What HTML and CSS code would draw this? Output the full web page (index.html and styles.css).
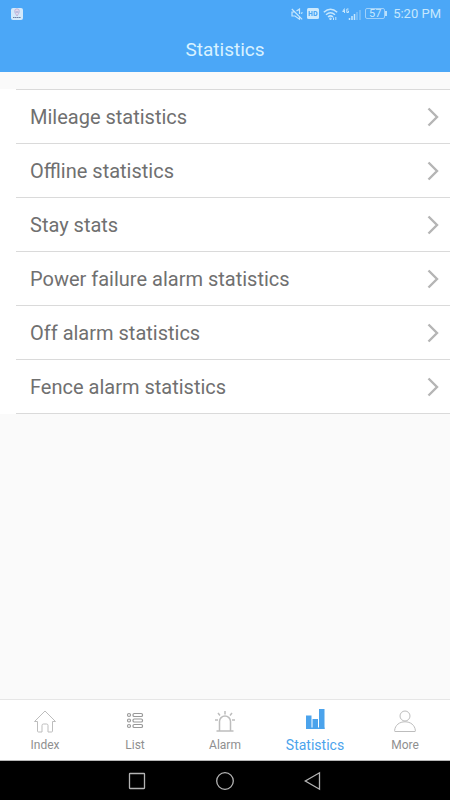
FILE: index.html
```html
<!DOCTYPE html>
<html lang="en">
<head>
<meta charset="utf-8">
<meta name="viewport" content="width=device-width, initial-scale=1">
<title>Statistics</title>
<link rel="stylesheet" href="styles.css">
</head>
<body>
<header class="top">
  <div class="status">
    <svg class="app-badge" width="12" height="12" viewBox="0 0 12 12" aria-hidden="true">
      <rect width="12" height="12" rx="2" fill="#d3e9fb"/>
      <path d="M6 .8a2.4 2.4 0 0 1 2.3 2.6C8.300 5 7 6.200 6 8 5 6.200 3.700 5 3.700 3.400A2.400 2.400 0 0 1 6 .8z" fill="#e3d9ee" stroke="#b9abd0" stroke-width=".8"/>
      <path d="M4.500 4h3" stroke="#8aa5d2" stroke-width="1"/>
      <path d="M2 9.500h8" stroke="#6f83a8" stroke-width="1.200" stroke-dasharray="1.500 .4"/>
    </svg>
    <svg width="12" height="12" viewBox="0 0 12 12" fill="none" stroke="#c6e7fd" stroke-width="1.200" aria-hidden="true">
      <path d="M.8 1l10.400 10.400M3.500 4H1v4h3l4.500 3.200V8.500M5.500 3L8.500 1v5M10 5.500l1.500-1"/>
    </svg>
    <svg width="12" height="11" viewBox="0 0 12 11" aria-hidden="true">
      <rect width="12" height="11" rx="1.500" fill="#cdeafd"/>
      <path d="M2.200 3v5M5 3v5M2.200 5.500H5M7.200 3.500v4h1q1.800 0 1.800-2t-1.800-2z" fill="none" stroke="#4ba7f5" stroke-width="1.200"/>
    </svg>
    <svg width="15" height="12" viewBox="0 0 15 12" fill="none" stroke="#c6e7fd" stroke-width="1.500" aria-hidden="true">
      <path d="M.8 4.200q6.700-6 13.400 0M3 6.700q4.500-4 9 0M5 9q2.500-2.200 5 0"/>
      <circle cx="7.500" cy="10.800" r=".5"/>
      <path d="M10.500 12V9.500M12.800 9v3" stroke-width="1"/>
    </svg>
    <svg width="19" height="12" viewBox="0 0 19 12" fill="none" stroke="#c6e7fd" aria-hidden="true">
      <path d="M2.500.5L.7 3.500h2.300M2.500 1.500v3.500M6.500 1H4.800v3.500h1.700V3H5.600" stroke-width="1"/>
      <path d="M7.500 12v-2M10 12V8M12.500 12V6" stroke-width="1.500"/>
      <path d="M15 12V4M18 12V2" stroke="#80c1f8" stroke-width="1.500"/>
    </svg>
    <span class="battery">57</span>
    <span class="clock">5:20 PM</span>
  </div>
  <h1 class="title">Statistics</h1>
</header>

<main class="content">
  <ul class="menu">
    <li><a class="row" href="#mileage">Mileage statistics<svg class="chevron" viewBox="0 0 12 20" aria-hidden="true"><path d="M1.500 1.500L10 10l-8.500 8.500"/></svg></a></li>
    <li><a class="row" href="#offline">Offline statistics<svg class="chevron" viewBox="0 0 12 20" aria-hidden="true"><path d="M1.500 1.500L10 10l-8.500 8.500"/></svg></a></li>
    <li><a class="row" href="#stay">Stay stats<svg class="chevron" viewBox="0 0 12 20" aria-hidden="true"><path d="M1.500 1.500L10 10l-8.500 8.500"/></svg></a></li>
    <li><a class="row" href="#power">Power failure alarm statistics<svg class="chevron" viewBox="0 0 12 20" aria-hidden="true"><path d="M1.500 1.500L10 10l-8.500 8.500"/></svg></a></li>
    <li><a class="row" href="#off">Off alarm statistics<svg class="chevron" viewBox="0 0 12 20" aria-hidden="true"><path d="M1.500 1.500L10 10l-8.500 8.500"/></svg></a></li>
    <li><a class="row" href="#fence">Fence alarm statistics<svg class="chevron" viewBox="0 0 12 20" aria-hidden="true"><path d="M1.500 1.500L10 10l-8.500 8.500"/></svg></a></li>
  </ul>
</main>

<nav class="tabs">
  <a class="tab" href="#index">
    <svg class="icon" viewBox="0 0 24 24" aria-hidden="true"><path d="M1.500 12.500L12 2l10.500 10.500h-3V22q0 1-1 1H15v-6.500q0-1.500-1.500-1.500h-3Q9 15 9 16.500V23H5.500q-1 0-1-1v-9.500z"/></svg>
    Index
  </a>
  <a class="tab" href="#list">
    <svg class="icon dark" viewBox="0 0 24 24" aria-hidden="true">
      <circle cx="6" cy="6" r="1.500"/><circle cx="6" cy="11.500" r="1.500"/><circle cx="6" cy="17" r="1.500"/>
      <rect x="10" y="4.500" width="9.500" height="3" rx="1.300"/><rect x="10" y="10" width="9.500" height="3" rx="1.300"/><rect x="10" y="15.500" width="9.500" height="3" rx="1.300"/>
    </svg>
    List
  </a>
  <a class="tab" href="#alarm">
    <svg class="icon heavy" viewBox="0 0 24 24" aria-hidden="true"><path d="M3.500 22h17M6.500 22V12.500a5.500 5.500 0 0 1 11 0V22M12 2v3.500M5 4l2 2.500M19 4l-2 2.500M2 11h3M19 11h3"/></svg>
    Alarm
  </a>
  <a class="tab active" href="#statistics" aria-current="page">
    <svg class="icon solid" viewBox="0 0 24 24" aria-hidden="true"><path d="M3 6.500h5.500V20H3zM9.500 10H15v10H9.500zM16 0h5.500v20H16z"/><path d="M3 18.500h18.500V20H3z"/></svg>
    Statistics
  </a>
  <a class="tab" href="#more">
    <svg class="icon" viewBox="0 0 24 24" aria-hidden="true"><circle cx="12" cy="7" r="5"/><path d="M2 22.500q-.5 0-.4-1C2.200 16 6.500 12.800 12 12.800S21.800 16 22.400 21.500q.1 1-.4 1z"/></svg>
    More
  </a>
</nav>

<footer class="system">
  <button class="key" type="button" aria-label="Recent apps"><svg viewBox="0 0 20 20" aria-hidden="true"><rect x="2.500" y="2.500" width="15" height="15" rx=".5"/></svg></button>
  <button class="key" type="button" aria-label="Home"><svg viewBox="0 0 20 20" aria-hidden="true"><circle cx="10" cy="10" r="8.300"/></svg></button>
  <button class="key" type="button" aria-label="Back"><svg viewBox="0 0 20 20" aria-hidden="true"><path d="M16.500 1.800v16.400L2.300 10z"/></svg></button>
</footer>
</body>
</html>
```
FILE: styles.css
```css
* {
  box-sizing: border-box;
}

body {
  margin: 0;
  min-height: 100vh;
  display: flex;
  flex-direction: column;
  background: #fafafa;
  color: #707070;
  font-family: Roboto, "Liberation Sans", sans-serif;
}

a {
  color: inherit;
  text-decoration: none;
}

.top {
  background: #4ba7f7;
  color: #d8f2ff;
}

.status {
  display: flex;
  align-items: center;
  gap: 4px;
  height: 27px;
  padding: 0 9px 0 11px;
}

.app-badge {
  margin-right: auto;
}

.battery {
  position: relative;
  width: 20px;
  height: 11px;
  margin-right: 4px;
  border: 1px solid #9fd1fa;
  border-radius: 2px;
  color: #c6e7fd;
  font-size: 11px;
  line-height: 10px;
  text-align: center;
}

.battery::after {
  content: "";
  position: absolute;
  top: 2px;
  right: -3px;
  width: 2px;
  height: 5px;
  background: #b9e0fc;
}

.clock {
  color: #c6e7fd;
  font-size: 13px;
}

.title {
  margin: 0;
  height: 45px;
  font-size: 19px;
  font-weight: 400;
  line-height: 46px;
  text-align: center;
}

.content {
  flex: 1;
  padding-top: 17px;
}

.menu {
  margin: 0;
  padding: 0 0 0 16px;
  background: #fff;
  list-style: none;
}

.menu li {
  border-bottom: 1px solid #dadada;
}

.menu li:first-child {
  border-top: 1px solid #dadada;
}

.row {
  display: flex;
  align-items: center;
  justify-content: space-between;
  height: 53px;
  padding: 0 11px 0 14px;
  font-size: 20px;
}

.chevron {
  width: 12px;
  height: 20px;
  fill: none;
  stroke: #b5b5b5;
  stroke-width: 2.4;
}

.tabs {
  display: flex;
  height: 62px;
  border-top: 1px solid #e6e6e6;
  border-bottom: 1px solid #b8b8b8;
  background: #fff;
}

.tab {
  flex: 1;
  display: flex;
  flex-direction: column;
  align-items: center;
  gap: 4px;
  padding-top: 9px;
  color: #8f8f8f;
  font-size: 12px;
  line-height: 16px;
}

.tab.active {
  color: #4ba3ec;
  font-size: 14px;
}

.icon {
  width: 24px;
  height: 24px;
  fill: none;
  stroke: #bdbdbd;
  stroke-width: 1;
}

.icon.dark {
  stroke: #999;
  stroke-width: 1.2;
}

.icon.heavy {
  stroke-width: 1.5;
}

.icon.solid {
  fill: #4ba3ec;
  stroke: none;
}

.system {
  display: flex;
  align-items: center;
  justify-content: center;
  gap: 68px;
  height: 39px;
  background: #000;
}

.key {
  width: 20px;
  height: 20px;
  padding: 0;
  border: 0;
  background: none;
}

.key svg {
  display: block;
  fill: none;
  stroke: #b4b4b4;
  stroke-width: 1.3;
}
```
